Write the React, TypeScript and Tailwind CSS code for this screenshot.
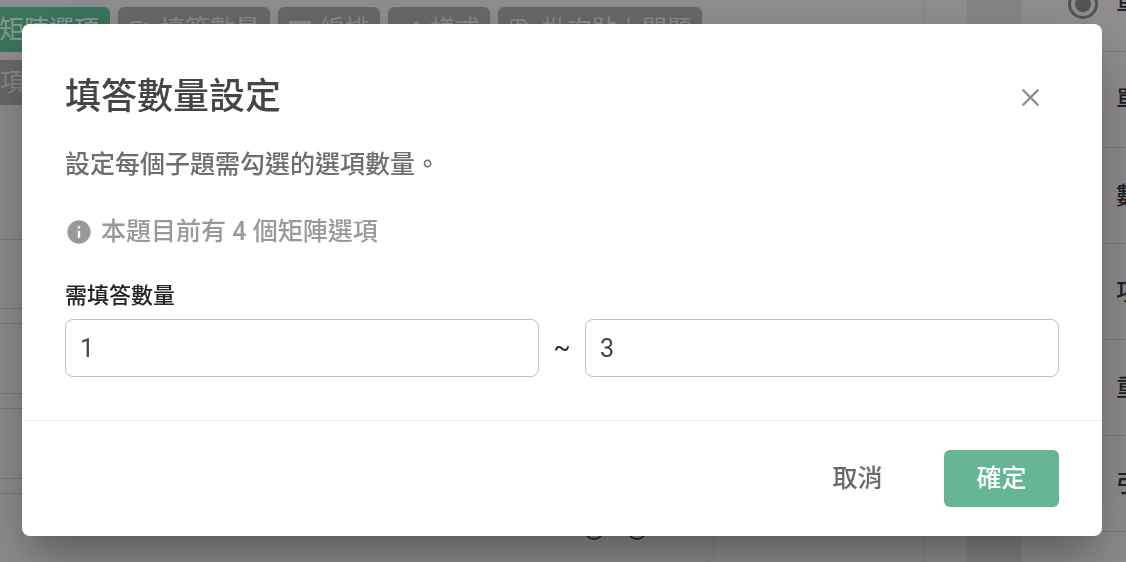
import { useState } from "react";
import type { ReactNode } from "react";
import { MdInfo, MdBrush } from "react-icons/md";
import { X } from "lucide-react";

const questionTypes = ["單選矩陣", "單選題", "數值題", "項目排序", "重複題組", "引言"];

function EditIcon() {
  return (
    <svg width="24" height="24" viewBox="0 0 24 24" fill="none" stroke="currentColor" strokeWidth="2">
      <path d="M14 4H6a4 4 0 0 0-4 4v10a4 4 0 0 0 4 4h10a4 4 0 0 0 4-4v-5" />
      <path d="M9 16v-4l9-8 3 3-8 9z" fill="currentColor" stroke="none" />
    </svg>
  );
}

function LayoutIcon() {
  return (
    <svg width="24" height="24" viewBox="0 0 24 24" stroke="currentColor" strokeWidth="3">
      <path d="M1 4.500h22M1 12h22M1 19.500h22" />
    </svg>
  );
}

function PasteIcon() {
  return (
    <svg width="26" height="26" viewBox="0 0 26 26" fill="none" stroke="currentColor" strokeWidth="2">
      <path d="M8 20H5a2 2 0 0 1-2-2V5a2 2 0 0 1 2-2h9" />
      <path d="M10 7V3h5l6 6v13a2 2 0 0 1-2 2h-9a2 2 0 0 1-2-2V9a2 2 0 0 1 2-2h4v5h6" />
    </svg>
  );
}

function ToolbarButton({ icon, label }: { icon: ReactNode; label: string }) {
  return (
    <button
      type="button"
      className="flex h-[45px] shrink-0 items-center gap-2 rounded-md bg-[#6c6a6d] px-2.5 text-[25px] text-[#8d8b8e]"
    >
      {icon}
      {label}
    </button>
  );
}

function Editor() {
  return (
    <div className="flex h-screen overflow-hidden bg-[#929093]">
      <main className="flex min-w-0 flex-1 flex-col">
        <div className="flex gap-2 pt-[7px] whitespace-nowrap">
          <button
            type="button"
            className="flex h-[45px] w-[110px] shrink-0 items-center justify-end rounded-r-md bg-[#3a775d] pr-[11px] text-[25px] text-[#8d9c95]"
          >
            矩陣選項
          </button>
          <ToolbarButton icon={<EditIcon />} label="填答數量" />
          <ToolbarButton icon={<LayoutIcon />} label="編排" />
          <ToolbarButton icon={<MdBrush size={24} />} label="樣式" />
          <ToolbarButton icon={<PasteIcon />} label="批次貼上問題" />
        </div>
        <div className="mt-2 flex">
          <button type="button" className="h-[45px] rounded-r-md bg-[#6c6a6d] pr-3 text-[25px] text-[#8d8b8e]">
            項目
          </button>
        </div>
        <div className="flex w-[714px] flex-1 flex-col rounded-br-lg border-r border-[#868487] pt-[134px]">
          {[0, 1, 2].map((row) => (
            <div key={row} className="mb-[14px] h-[71px] border-y border-[#7f7d80] first:h-[70px]" />
          ))}
          <div className="flex flex-1 items-start border-t border-[#7f7d80] pt-[26px] pl-[584px]">
            <span className="h-5 w-5 rounded-full border-2 border-[#2f2d30]" />
            <span className="ml-[23px] h-5 w-5 rounded-full border-2 border-[#2f2d30]" />
          </div>
        </div>
      </main>
      <div className="w-11 border-l border-[#868487]" />
      <div className="w-[54px] border-r border-[#868487] bg-[#89878a]" />
      <aside className="-mt-11 w-[105px] overflow-hidden">
        {questionTypes.map((name, i) => (
          <div
            key={name}
            className="flex h-24 items-center border-b border-[#7f7d80] pl-[47px] text-2xl font-medium whitespace-nowrap text-[#242225]"
          >
            <span className="flex w-12 shrink-0">
              {i === 0 && (
                <span className="flex h-[30px] w-[30px] items-center justify-center rounded-full border-[3px] border-[#565457]">
                  <span className="h-4 w-4 rounded-full bg-[#565457]" />
                </span>
              )}
            </span>
            {name}
          </div>
        ))}
      </aside>
    </div>
  );
}

export default function App() {
  const [min, setMin] = useState("1");
  const [max, setMax] = useState("3");

  return (
    <div className="font-['Roboto','Noto_Sans_CJK_TC',sans-serif]">
      <Editor />

      <div className="fixed inset-0 pt-6 pr-6 pl-[22px]">
        <div
          role="dialog"
          aria-labelledby="dialog-title"
          className="rounded-lg bg-white shadow-[0_20px_27px_-13px_rgba(0,0,0,0.2),0_43px_68px_5px_rgba(0,0,0,0.14),0_16px_83px_14px_rgba(0,0,0,0.12)]"
        >
          <div className="px-[43px] pt-[46px] pb-[43px]">
            <div className="flex items-center justify-between">
              <h2 id="dialog-title" className="text-4xl leading-[54px] font-medium text-[#464447]">
                填答數量設定
              </h2>
              <button
                type="button"
                aria-label="關閉"
                className="flex h-[54px] w-[58px] items-center justify-center text-[#8f8d90]"
              >
                <X size={29} strokeWidth={2} />
              </button>
            </div>

            <p className="mt-[23px] text-[25px] leading-9 font-medium text-[#6f6d70]">設定每個子題需勾選的選項數量。</p>

            <p className="mt-[31px] flex items-center gap-2 text-[25px] leading-9 font-medium text-[#9a989b]">
              <MdInfo size={28} />
              本題目前有 4 個矩陣選項
            </p>

            <label htmlFor="min-count" className="mt-[31px] block text-[22px] leading-[30px] font-medium text-[#242225]">
              需填答數量
            </label>
            <div className="mt-2 flex items-center">
              <input
                id="min-count"
                value={min}
                onChange={(e) => setMin(e.target.value)}
                className="h-[58px] min-w-0 flex-1 rounded-lg border border-[#c4c2c8] px-3.5 text-[25px] text-[#464447]"
              />
              <span className="w-[46px] text-center text-[25px] text-[#242225]">~</span>
              <input
                aria-label="最多填答數量"
                value={max}
                onChange={(e) => setMax(e.target.value)}
                className="h-[58px] min-w-0 flex-1 rounded-lg border border-[#c4c2c8] px-3.5 text-[25px] text-[#464447]"
              />
            </div>
          </div>

          <div className="flex justify-end gap-[29px] border-t border-[#efedf1] px-[43px] py-[29px] text-[25px] font-medium">
            <button type="button" className="h-[57px] min-w-[115px] rounded-md text-[#6b696c]">
              取消
            </button>
            <button type="button" className="h-[57px] min-w-[115px] rounded-md bg-[#65b596] text-white">
              確定
            </button>
          </div>
        </div>
      </div>
    </div>
  );
}
